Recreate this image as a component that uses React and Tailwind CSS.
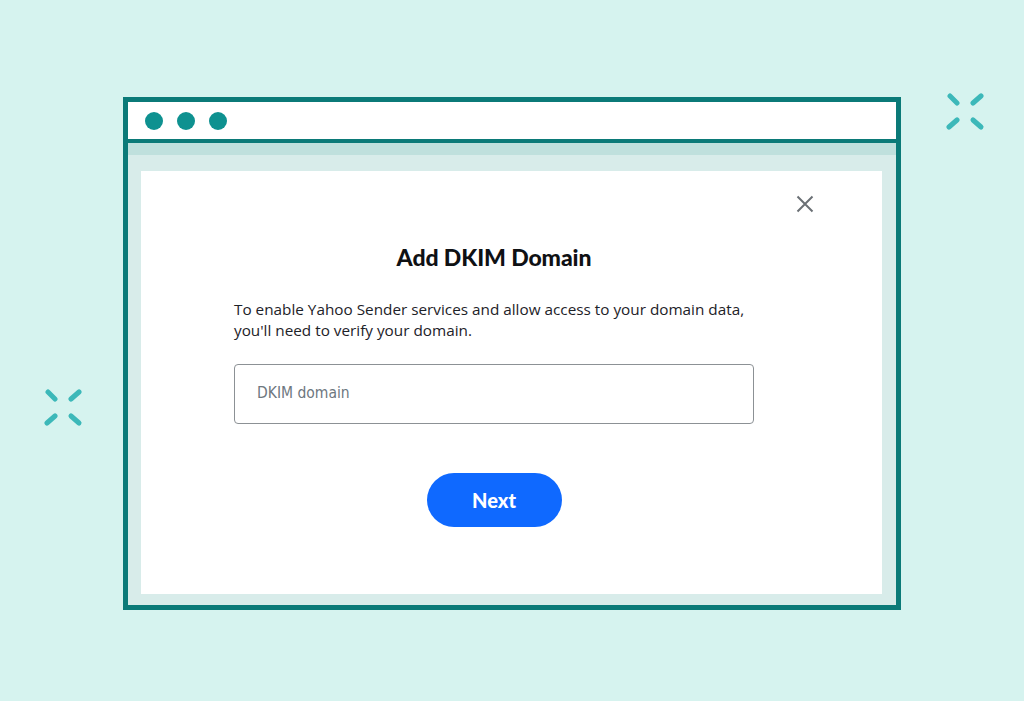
import React from 'react';

const Sparkle = ({ className }) => (
  <svg className={className} width="40" height="40" viewBox="0 0 40 40" fill="none">
    <g stroke="#3cb8b9" strokeWidth="5" strokeLinecap="round">
      <line x1="4" y1="3" x2="11" y2="10" />
      <line x1="27" y1="10" x2="35" y2="3" />
      <line x1="3" y1="34" x2="11" y2="27" />
      <line x1="27" y1="27" x2="35" y2="34" />
    </g>
  </svg>
);

const App = () => {
  return (
    <div className="relative w-[1024px] h-[701px] overflow-hidden bg-[#d6f3ef] pt-[97px] pl-[123px]">
      <Sparkle className="absolute left-[946px] top-[93px]" />
      <Sparkle className="absolute left-[44px] top-[389px]" />

      {/* browser window */}
      <div className="w-[778px] h-[513px] border-[5px] border-[#0b7a78] flex flex-col bg-[#d8ecea]">
        <div className="h-[37px] bg-white flex items-center gap-[14px] pl-[17px] shrink-0">
          <span className="w-[18px] h-[18px] rounded-full bg-[#0e9190]" />
          <span className="w-[18px] h-[18px] rounded-full bg-[#0e9190]" />
          <span className="w-[18px] h-[18px] rounded-full bg-[#0e9190]" />
        </div>
        <div className="h-[4px] bg-[#0b7a78] shrink-0" />
        <div className="h-[12px] bg-[#bfe0dd] shrink-0" />
        <div className="flex-1 pt-[16px] pl-[13px] pr-[14px] pb-[11px]">
          <div className="relative h-full bg-white">
            <button className="absolute left-[655px] top-[24px] w-[18px] h-[18px]">
              <svg width="18" height="18" viewBox="0 0 18 18" fill="none">
                <path d="M1.5 1.5 L16.5 16.5 M16.5 1.5 L1.5 16.5" stroke="#6b7075" strokeWidth="2" />
              </svg>
            </button>

            <div className="ml-[93px] w-[520px] pt-[72px] flex flex-col items-center font-['Lato',sans-serif]">
              <h1 className="text-[23px] leading-[28px] font-black text-[#0f1114] tracking-[-0.1px]">
                Add DKIM Domain
              </h1>
              <p className="self-start mt-[28px] font-['Open_Sans',sans-serif] text-[15.3px] leading-[21px] text-[#1d2228] whitespace-nowrap">
                To enable Yahoo Sender services and allow access to your domain data,
                <br />
                you'll need to verify your domain.
              </p>
              <div className="self-stretch mt-[23px] h-[60px] border-[1.5px] border-[#8c9195] rounded-[4px] flex items-center px-[22px]">
                <span className="font-['DejaVu_Sans_Condensed','DejaVu_Sans',sans-serif] text-[15.5px] text-[#6e7780]">
                  DKIM domain
                </span>
              </div>
              <button className="mt-[49px] w-[135px] h-[54px] rounded-full bg-[#0f69ff] text-white text-[20px] font-black">
                Next
              </button>
            </div>
          </div>
        </div>
      </div>
    </div>
  );
};

export default App;
